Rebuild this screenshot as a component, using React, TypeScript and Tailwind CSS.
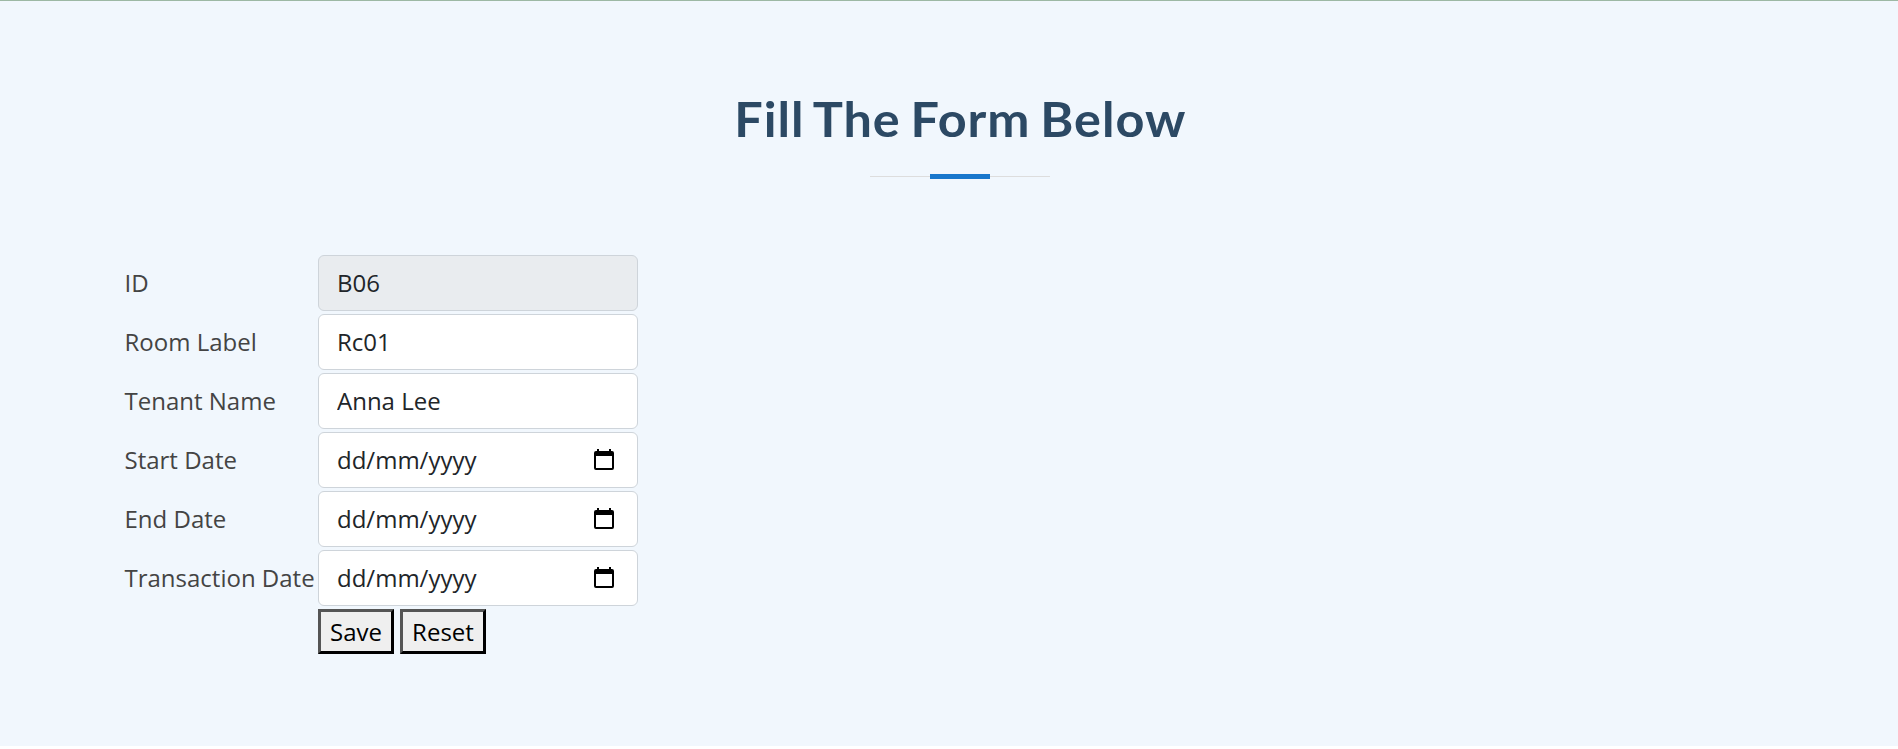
import { useState } from "react";

function CalendarIcon() {
  return (
    <svg viewBox="0 0 20 21" className="mb-px h-[21px] w-5 shrink-0" aria-hidden="true">
      <rect x="3" y="0" width="2" height="3" />
      <rect x="15" y="0" width="2" height="3" />
      <path
        fillRule="evenodd"
        d="M2 2h16a2 2 0 0 1 2 2v15a2 2 0 0 1-2 2H2a2 2 0 0 1-2-2V4a2 2 0 0 1 2-2ZM2 7v12h16V7Z"
      />
    </svg>
  );
}

const labelClass = "whitespace-nowrap text-[#444444]";
const fieldClass =
  "h-14 w-80 rounded-[6px] border border-[#ced4da] pl-[18px] text-[#212529] outline-none";

function TextRow({
  label,
  value,
  readOnly = false,
  onChange,
}: {
  label: string;
  value: string;
  readOnly?: boolean;
  onChange?: (value: string) => void;
}) {
  return (
    <>
      <span className={labelClass}>{label}</span>
      <input
        aria-label={label}
        value={value}
        readOnly={readOnly}
        onChange={(e) => onChange?.(e.target.value)}
        className={`${fieldClass} pr-[18px] pb-[2px] ${readOnly ? "bg-[#e9ecef]" : "bg-white"}`}
      />
    </>
  );
}

function DateRow({ label }: { label: string }) {
  return (
    <>
      <span className={labelClass}>{label}</span>
      <div className={`${fieldClass} flex items-center justify-between bg-white pr-[23px]`}>
        <span>dd/mm/yyyy</span>
        <CalendarIcon />
      </div>
    </>
  );
}

const buttonClass =
  "h-[45px] border-[3px] border-t-[#555555] border-r-black border-b-black border-l-[#555555] bg-[#efefef] text-center leading-9 text-black";

export default function App() {
  const [room, setRoom] = useState("Rc01");
  const [tenant, setTenant] = useState("Anna Lee");

  return (
    <div className="h-[749px] overflow-hidden bg-white font-['Open_Sans',sans-serif] text-2xl">
      <section className="h-[746px] border-t border-[#9db8a4] bg-[#f1f7fd] pr-[103.5px] pl-[124.5px]">
        <header className="flex flex-col items-center pt-[89px]">
          <h2 className="scale-x-105 pl-[2px] font-['Lato',sans-serif] text-[48px] leading-[58px] font-bold tracking-[0.9px] [word-spacing:-3.2px] whitespace-nowrap text-[#2c4964]">
            Fill The Form Below
          </h2>
          <div className="mt-[26px] flex h-[5px] w-[180px] items-center justify-center">
            <div className="h-px flex-1 bg-[#dddddd]" />
            <div className="h-[5px] w-[60px] bg-[#1977cc]" />
            <div className="h-px flex-1 bg-[#dddddd]" />
          </div>
        </header>
        <form
          className="mt-[76px] grid grid-cols-[190.5px_320px] items-center gap-x-[3px] gap-y-[3px]"
          onSubmit={(e) => e.preventDefault()}
        >
          <TextRow label="ID" value="B06" readOnly />
          <TextRow label="Room Label" value={room} onChange={setRoom} />
          <TextRow label="Tenant Name" value={tenant} onChange={setTenant} />
          <DateRow label="Start Date" />
          <DateRow label="End Date" />
          <DateRow label="Transaction Date" />
          <div className="col-start-2 flex gap-[6px]">
            <button type="submit" className={`${buttonClass} w-[76px]`}>
              Save
            </button>
            <button
              type="button"
              className={`${buttonClass} w-[86px]`}
              onClick={() => {
                setRoom("Rc01");
                setTenant("Anna Lee");
              }}
            >
              Reset
            </button>
          </div>
        </form>
      </section>
    </div>
  );
}
